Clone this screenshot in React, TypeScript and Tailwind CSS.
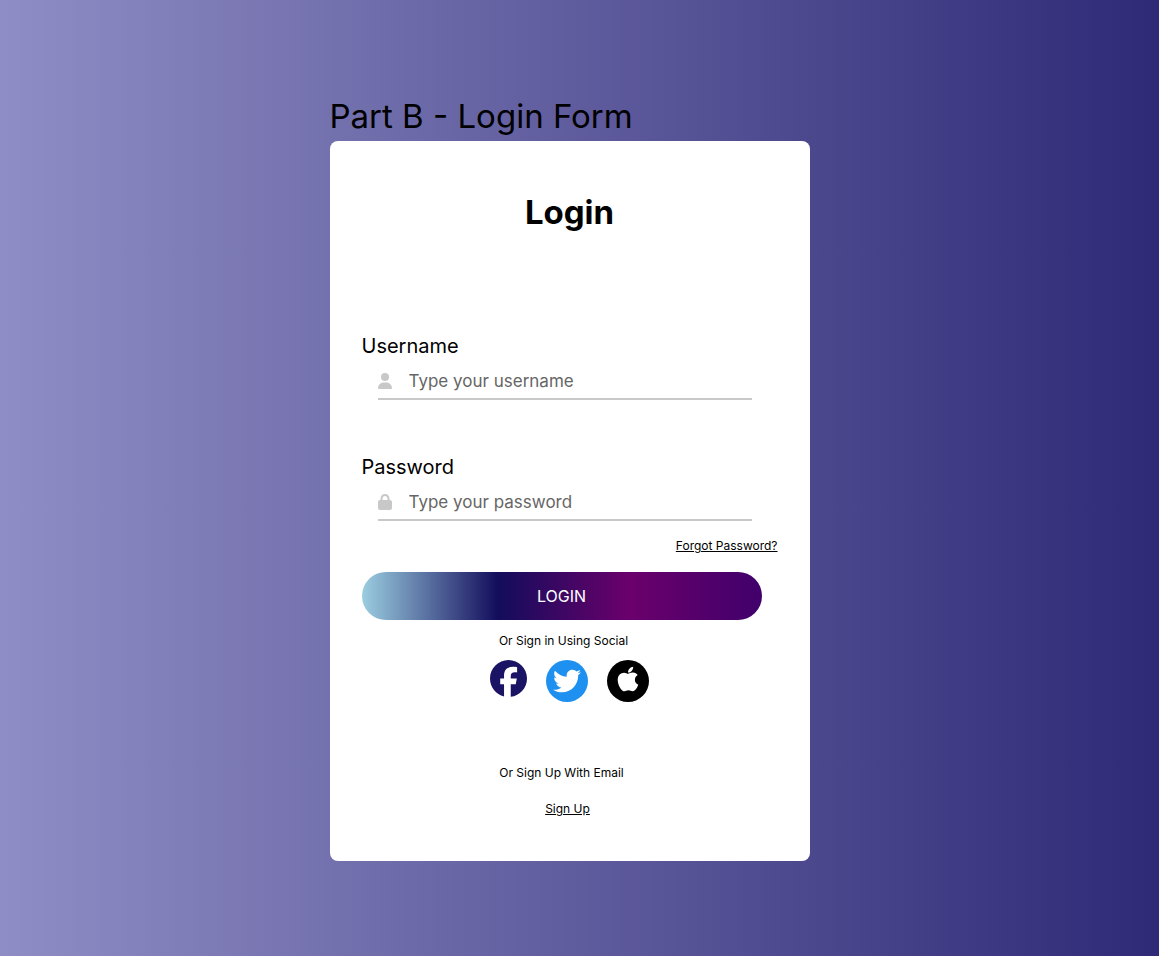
import React from "react";
import { FaApple, FaTwitter } from "react-icons/fa";
import { FaFacebook, FaLock, FaUser } from "react-icons/fa6";

type FieldProps = {
  id: string;
  label: string;
  type: string;
  placeholder: string;
  icon: React.ReactNode;
};

function Field({ id, label, type, placeholder, icon }: FieldProps) {
  return (
    <div>
      <label htmlFor={id} className="block text-[20px] leading-[30px]">
        {label}
      </label>
      <div className="mr-[26px] ml-4 flex h-[39px] items-center border-b-2 border-[#c8c8c8] pt-[3px]">
        <span className="-ml-px w-8 shrink-0 text-base text-[#c8c8c8]">{icon}</span>
        <input
          id={id}
          type={type}
          placeholder={placeholder}
          className="min-w-0 flex-1 bg-transparent text-[17px] leading-6 text-black outline-none placeholder:text-[#666666]"
        />
      </div>
    </div>
  );
}

export default function App() {
  return (
    <main className="flex min-h-screen flex-col items-center bg-[linear-gradient(to_right_in_srgb,#8f8dc5,#2f2a76)] px-4 pt-[92px] pb-24 font-['Inter',sans-serif] text-black">
      <div className="w-full max-w-[480px] sm:relative sm:right-[10px]">
        <h1 className="mb-px text-[33px] leading-[48px]">Part B - Login Form</h1>
        <form className="rounded-lg bg-white px-8 pt-[47px] pb-[43px]" onSubmit={(e) => e.preventDefault()}>
          <h2 className="text-center text-[33px] leading-[48px] font-bold">Login</h2>
          <div className="mt-[95px] flex flex-col gap-[52px]">
            <Field id="username" label="Username" type="text" placeholder="Type your username" icon={<FaUser />} />
            <Field id="password" label="Password" type="password" placeholder="Type your password" icon={<FaLock />} />
          </div>
          <div className="mt-4 flex justify-end text-xs leading-[18px]">
            <a href="#forgot" className="underline">Forgot Password?</a>
          </div>
          <div className="mt-[17px] pr-4">
            <button
              type="submit"
              className="h-12 w-full rounded-full bg-[linear-gradient(to_right,#9bcde0_0%,#130d5c_34%,#6b006b_67%,#40006b_100%)] text-base text-white"
            >
              LOGIN
            </button>
          </div>
          <p className="mt-3 pr-3 text-center text-xs leading-[18px]">Or Sign in Using Social</p>
          <div className="mt-[10px] flex items-start justify-center gap-[19px]">
            <a href="#facebook" aria-label="Facebook" className="text-[37px] text-[#1b1464]"><FaFacebook /></a>
            <a href="#twitter" aria-label="Twitter" className="flex size-[42px] items-center justify-center rounded-full bg-[#1e90f0] text-[28px] text-white"><FaTwitter /></a>
            <a href="#apple" aria-label="Apple" className="flex size-[42px] items-center justify-center rounded-full bg-black pb-1 text-[28px] text-white"><FaApple /></a>
          </div>
          <p className="mt-[62px] pr-4 text-center text-xs leading-[18px]">Or Sign Up With Email</p>
          <p className="mt-[18px] pr-1 text-center text-xs leading-[18px]">
            <a href="#signup" className="underline">Sign Up</a>
          </p>
        </form>
      </div>
    </main>
  );
}
